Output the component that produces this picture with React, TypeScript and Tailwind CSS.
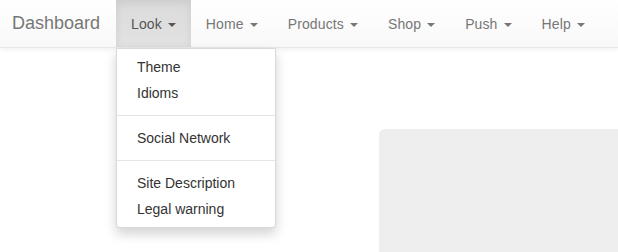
import React from 'react';

const navItems = ['Look', 'Home', 'Products', 'Shop', 'Push', 'Help'];

const Caret = () => (
  <span className="ml-[2px] inline-block h-0 w-0 align-middle border-t-[4px] border-x-[4px] border-t-current border-x-transparent" />
);

const DropdownMenu = () => (
  <ul className="absolute left-0 top-[48px] z-20 w-[160px] py-[5px] bg-white border border-black/15 rounded-b-[4px] shadow-[0_6px_12px_rgba(0,0,0,0.175)] text-[14px] leading-[20px] text-[#333]">
    <li className="px-[20px] py-[3px]">Theme</li>
    <li className="px-[20px] py-[3px]">Idioms</li>
    <li className="my-[9px] h-px bg-[#e5e5e5]" />
    <li className="px-[20px] py-[3px]">Social Network</li>
    <li className="my-[9px] h-px bg-[#e5e5e5]" />
    <li className="px-[20px] py-[3px]">Site Description</li>
    <li className="px-[20px] py-[3px]">Legal warning</li>
  </ul>
);

export default function App() {
  return (
    <div className="relative h-[252px] w-[618px] overflow-hidden bg-white font-['Liberation_Sans',Arial,sans-serif]">
      <nav className="relative z-10 flex h-[48px] bg-gradient-to-b from-white to-[#f8f8f8] border-b border-[#e7e7e7] shadow-[0_1px_5px_rgba(0,0,0,0.075)]">
        <a className="w-[116px] shrink-0 pl-[12px] pt-[13px] text-[18px] leading-[20px] text-[#777]">Dashboard</a>
        <ul className="flex">
          {navItems.map((item, i) => (
            <li key={item} className="relative">
              <a
                className={
                  i === 0
                    ? 'block h-[47px] px-[15px] pt-[14px] text-[14px] leading-[20px] tracking-[0.12px] text-[#555] bg-gradient-to-b from-[#dbdbdb] to-[#e2e2e2] shadow-[inset_0_3px_9px_rgba(0,0,0,0.075)]'
                    : 'block h-[47px] px-[15px] pt-[14px] text-[14px] leading-[20px] tracking-[0.12px] text-[#777]'
                }
              >
                {item} <Caret />
              </a>
              {i === 0 && <DropdownMenu />}
            </li>
          ))}
        </ul>
      </nav>
      <main className="pl-[379px] pt-[81px]">
        <div className="h-[200px] w-[400px] rounded-[6px] bg-[#eee]" />
      </main>
    </div>
  );
}
